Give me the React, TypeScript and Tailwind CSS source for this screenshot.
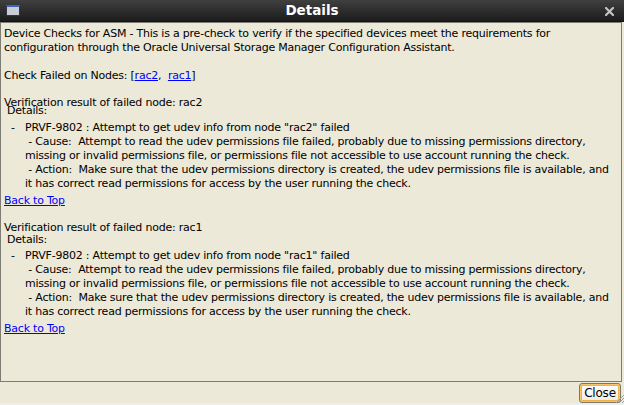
import React from 'react';

const font = { fontFamily: '"DejaVu Sans", sans-serif' };

const Issue: React.FC<{ node: string }> = ({ node }) => (
    <div className="flex">
        <span className="ml-[7px] w-[14px] shrink-0">-</span>
        <div className="whitespace-pre">
            <div>PRVF-9802 : Attempt to get udev info from node "{node}" failed</div>
            <div>{' - Cause:  Attempt to read the udev permissions file failed, probably due to missing permissions directory,'}</div>
            <div>missing or invalid permissions file, or permissions file not accessible to use account running the check.</div>
            <div>{' - Action:  Make sure that the udev permissions directory is created, the udev permissions file is available, and'}</div>
            <div>it has correct read permissions for access by the user running the check.</div>
        </div>
    </div>
);

const App: React.FC = () => {
    return (
        <div className="w-[624px] h-[405px] bg-[#eeeeee] overflow-hidden" style={font}>
            <div className="h-[403px] flex flex-col bg-[#ece9d8]">
                {/* title bar */}
                <div className="relative h-[22px] flex items-center justify-center bg-gradient-to-b from-[#404040] to-[#1c1c1c] border-b border-[#111]">
                    <div className="absolute left-[6px] top-[5px] w-[14px] h-[11px] border border-[#334] bg-[#c8cdd6] border-t-[2px] border-t-[#3a64c8]" />
                    <span className="text-white font-bold text-[13.5px] leading-none">Details</span>
                    <svg className="absolute left-[605px] top-[7px]" width="9" height="9" viewBox="0 0 9 9">
                        <path d="M1 1L8 8M8 1L1 8" stroke="#c4c4c4" strokeWidth="2.2" strokeLinecap="square" />
                    </svg>
                </div>

                {/* content */}
                <div className="h-[360px] mr-[2px] border border-[#7d7d74] px-[3px] pt-[4px] text-[11px] tracking-[-0.22px] leading-[14px] text-black overflow-hidden">
                    <div className="whitespace-pre">
                        <div>Device Checks for ASM - This is a pre-check to verify if the specified devices meet the requirements for</div>
                        <div>configuration through the Oracle Universal Storage Manager Configuration Assistant.</div>
                    </div>
                    <div className="mt-[14px] whitespace-pre">
                        Check Failed on Nodes: [<a className="text-[#0000ff] underline">rac2</a>,  <a className="text-[#0000ff] underline">rac1</a>]
                    </div>

                    <div className="mt-[13px]">Verification result of failed node: rac2</div>
                    <div className="mt-[-6px] pl-[3px]">Details:</div>
                    <div className="mt-[3px]"><Issue node="rac2" /></div>
                    <div className="mt-[3px]"><a className="text-[#0000ff] underline">Back to Top</a></div>

                    <div className="mt-[13px]">Verification result of failed node: rac1</div>
                    <div className="mt-[-2px] pl-[3px]">Details:</div>
                    <div className="mt-[2px]"><Issue node="rac1" /></div>
                    <div className="mt-[3px]"><a className="text-[#0000ff] underline">Back to Top</a></div>
                </div>

                {/* bottom bar */}
                <div className="relative flex-1 flex justify-end items-start pt-[1px] pr-[3px]">
                    <button className="w-[42px] h-[20px] rounded-[3px] border border-[#7a7a6a] p-0 bg-[#f7c46a]">
                        <div className="m-[1px] h-[16px] rounded-[2px] border border-[#f0b048] bg-gradient-to-b from-[#ffffff] to-[#efede4] flex items-center justify-center text-[12px] tracking-[-0.2px] text-black leading-none">
                            Close
                        </div>
                    </button>
                    <svg className="absolute right-0 bottom-0" width="10" height="10" viewBox="0 0 10 10">
                        <path d="M10 2L2 10M10 5L5 10M10 8L8 10" stroke="#a0a098" strokeWidth="1" />
                    </svg>
                </div>
            </div>
        </div>
    );
};

export default App;
